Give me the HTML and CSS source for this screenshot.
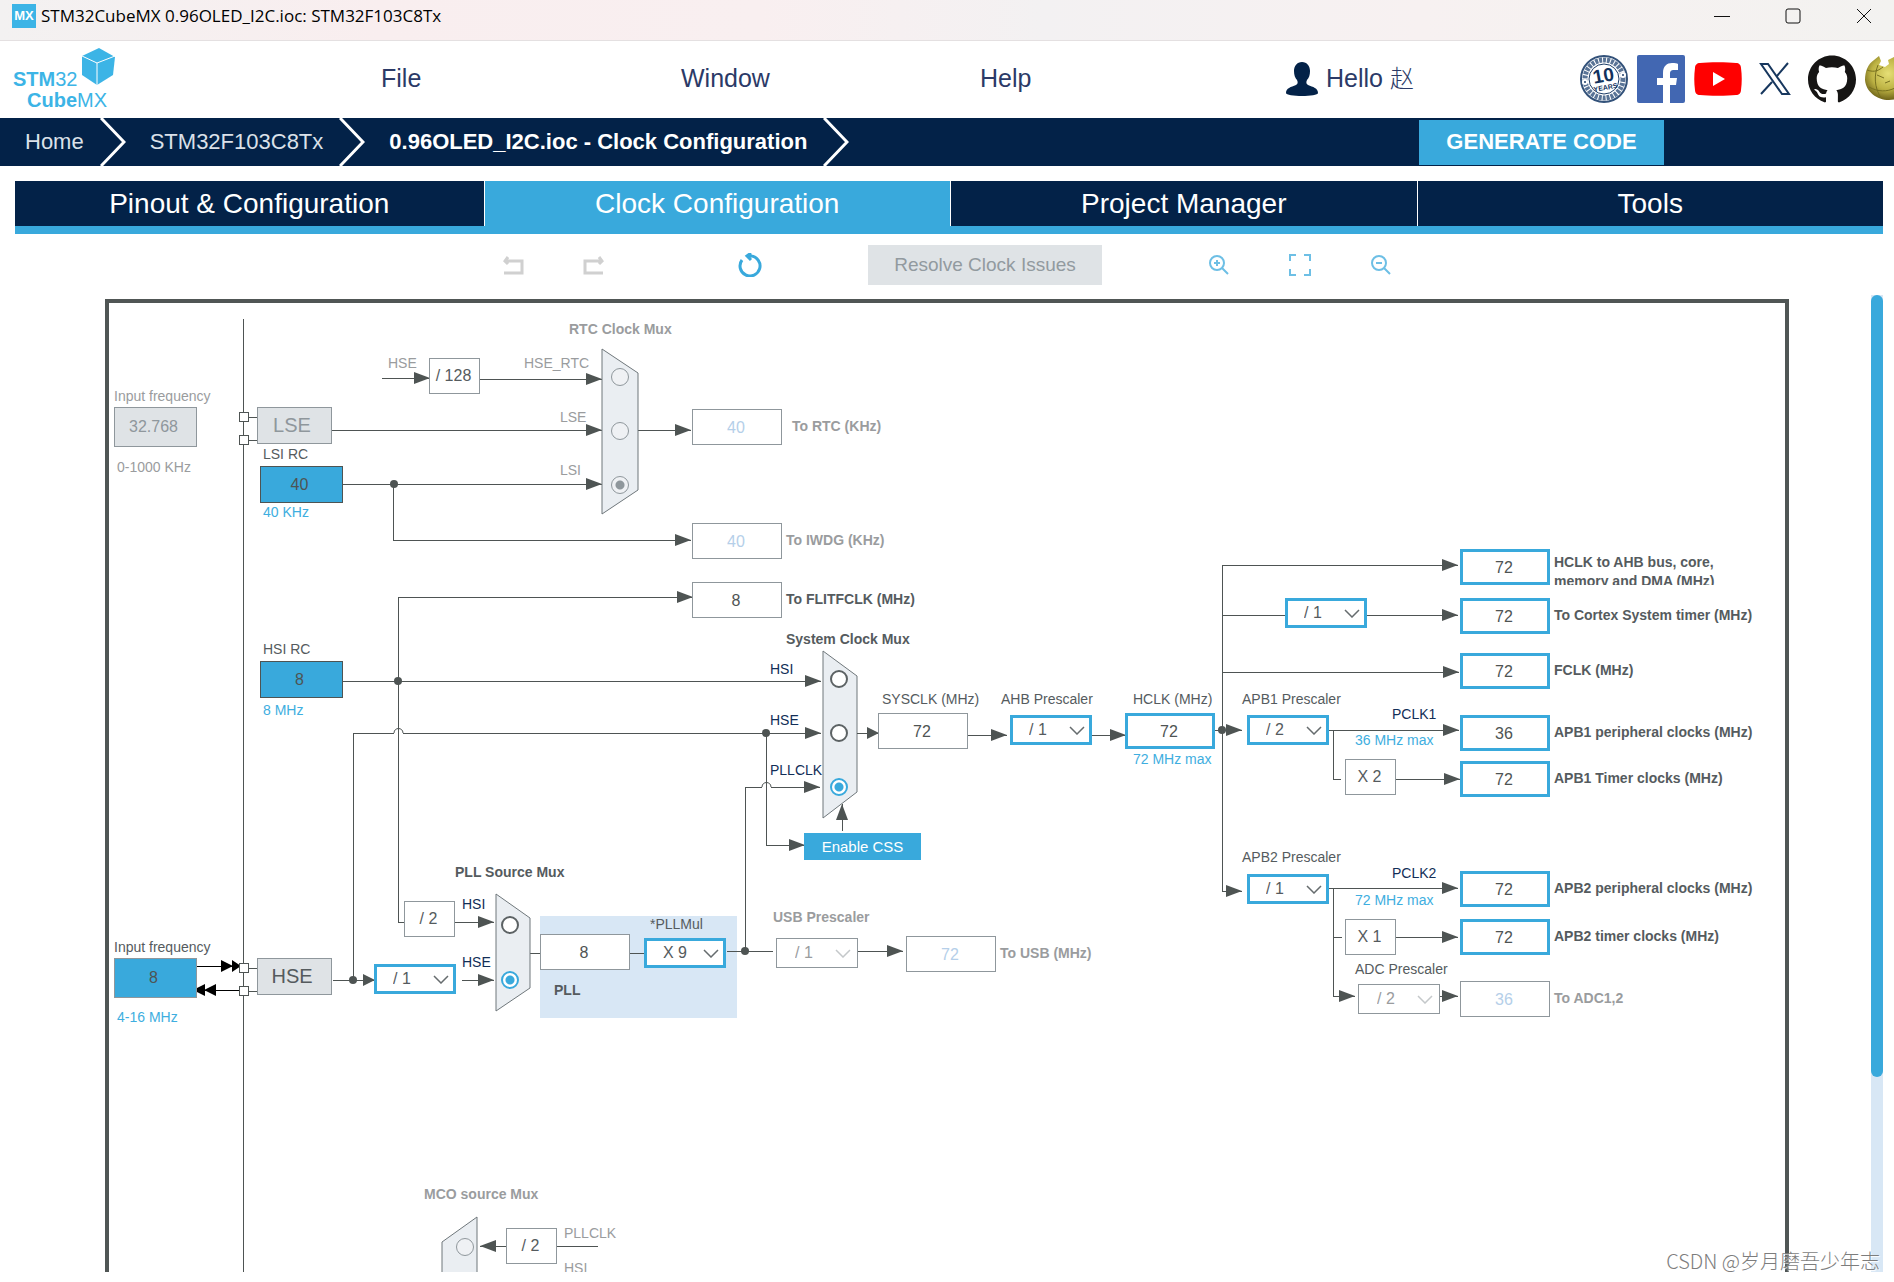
FILE: index.html
```html
<!DOCTYPE html>
<html lang="en">
<head>
<meta charset="utf-8">
<title>STM32CubeMX 0.96OLED_I2C.ioc: STM32F103C8Tx</title>
<link rel="stylesheet" href="styles.css">
</head>
<body>
<div class="window">

<header class="titlebar">
  <span class="app-icon" aria-hidden="true">MX</span>
  <h1 class="app-title">STM32CubeMX 0.96OLED_I2C.ioc: STM32F103C8Tx</h1>
  <div class="window-controls">
    <button type="button" aria-label="Minimize"><svg width="16" height="16" viewBox="0 0 16 16"><path d="M0 8.5h16"/></svg></button>
    <button type="button" aria-label="Maximize"><svg width="16" height="16" viewBox="0 0 16 16"><rect x="1" y="1" width="14" height="14" rx="2"/></svg></button>
    <button type="button" aria-label="Close"><svg width="16" height="16" viewBox="0 0 16 16"><path d="M1 1l14 14M15 1L1 15"/></svg></button>
  </div>
</header>

<nav class="menubar" aria-label="Main menu">
  <svg class="logo" width="104" height="66" viewBox="0 0 104 66" role="img" aria-label="STM32 CubeMX">
    <path class="cube" d="M86 2l16 9-2 18-16 10-15-10V10z"/>
    <path class="cube-edge" d="M69 10l15 7 18-7M84 17v22"/>
    <text x="0" y="40"><tspan class="strong">STM</tspan>32</text>
    <text x="14" y="61"><tspan class="strong">Cube</tspan>MX</text>
  </svg>
  <a href="#file">File</a>
  <a href="#window">Window</a>
  <a href="#help">Help</a>
  <a class="user" href="#account">
    <svg width="32" height="34" viewBox="0 0 32 34" aria-hidden="true"><path d="M16 0c5 0 8 4 8 9 0 4-1 7-3 9-1 2-1 4 1 5 5 2 10 3 10 8 0 2-8 3-16 3S0 33 0 31c0-5 5-6 10-8 2-1 2-3 1-5-2-2-3-5-3-9 0-5 3-9 8-9z"/></svg>
    <span>Hello <span class="user-name">赵</span></span>
  </a>
  <div class="social">
    <a href="#anniversary" aria-label="10 years">
      <svg width="48" height="48" viewBox="0 0 48 48">
        <circle cx="24" cy="24" r="23" fill="#fff" stroke="#33527a" stroke-width="2"/>
        <circle cx="24" cy="24" r="19" fill="none" stroke="#5a7496" stroke-width="5" stroke-dasharray="3 1"/>
        <circle cx="24" cy="24" r="15" fill="#fff" stroke="#1d3d68" stroke-width="1"/>
        <circle cx="5" cy="27" r="3" fill="#fff"/><circle cx="43" cy="20" r="3" fill="#fff"/>
        <circle cx="5" cy="27" r="1" fill="#1d3d68"/><circle cx="43" cy="20" r="1" fill="#1d3d68"/>
        <g transform="rotate(-10 24 24)" fill="#12325d" font-family="Liberation Sans, sans-serif" font-weight="bold" text-anchor="middle">
          <text x="24" y="27" font-size="19">10</text>
          <text x="24" y="35" font-size="7">YEARS</text>
        </g>
      </svg>
    </a>
    <a href="#facebook" aria-label="Facebook">
      <svg width="48" height="48" viewBox="0 0 48 48"><rect width="48" height="48" rx="2" fill="#4267b2"/><path fill="#fff" d="M26 48V30h-6v-7h6v-5c0-7 4-10 9-10 3 0 5 0 6 1v6h-4c-3 0-4 1-4 4v4h7l-1 7h-6v18z"/></svg>
    </a>
    <a href="#youtube" aria-label="YouTube">
      <svg width="48" height="48" viewBox="0 0 48 48"><path fill="#f00" d="M6 8c8-1 28-1 36 0 3 0 5 2 5 5 1 7 1 15 0 22 0 3-2 5-5 5-8 1-28 1-36 0-3 0-5-2-5-5-1-7-1-15 0-22 0-3 2-5 5-5z"/><path fill="#fff" d="M19 17l12 7-12 7z"/></svg>
    </a>
    <a href="#x" aria-label="X">
      <svg width="48" height="48" viewBox="0 0 48 48"><path fill="none" stroke="#17375e" stroke-width="2" d="M10 9h7l21 30h-7zM37 8L26 21M21 27L10 39"/></svg>
    </a>
    <a href="#github" aria-label="GitHub">
      <svg width="48" height="48" viewBox="0 0 24 24"><path fill="#161514" d="M12 .297c-6.63 0-12 5.373-12 12 0 5.303 3.438 9.8 8.205 11.385.6.113.82-.258.82-.577 0-.285-.01-1.04-.015-2.04-3.338.724-4.042-1.61-4.042-1.61C4.422 18.07 3.633 17.7 3.633 17.7c-1.087-.744.084-.729.084-.729 1.205.084 1.838 1.236 1.838 1.236 1.07 1.835 2.809 1.305 3.495.998.108-.776.417-1.305.76-1.605-2.665-.3-5.466-1.332-5.466-5.93 0-1.31.465-2.38 1.235-3.22-.135-.303-.54-1.523.105-3.176 0 0 1.005-.322 3.3 1.23.96-.267 1.98-.399 3-.405 1.02.006 2.04.138 3 .405 2.28-1.552 3.285-1.23 3.285-1.23.645 1.653.24 2.873.12 3.176.765.84 1.23 1.91 1.23 3.22 0 4.61-2.805 5.625-5.475 5.92.42.36.81 1.096.81 2.22 0 1.606-.015 2.896-.015 3.286 0 .315.21.69.825.57C20.565 22.092 24 17.592 24 12.297c0-6.627-5.373-12-12-12"/></svg>
    </a>
    <a href="#wiki" aria-label="Wiki">
      <svg width="48" height="48" viewBox="0 0 48 48">
        <defs><radialGradient id="globe" cx="0.5" cy="0.4" r="0.6"><stop offset="0" stop-color="#e6df76"/><stop offset="0.6" stop-color="#bdb344"/><stop offset="1" stop-color="#6f6419"/></radialGradient></defs>
        <path fill="url(#globe)" d="M9 5l5-4 2 5-2 4 6 2 4-3-1-4 6-3 6-1C44 9 47 17 46 25c-1 12-10 20-22 20S1 37 0 25C0 16 3 9 9 5z"/>
        <path fill="none" stroke="#77701f" d="M2 15c8 3 12 0 16-3M4 32c9 5 18 5 26 1M13 10c-4 10-4 22 3 33M12 20l7 3M20 28l5-2"/>
      </svg>
    </a>
  </div>
</nav>

<nav class="breadcrumb" aria-label="Breadcrumb">
  <a href="#home">Home</a>
  <svg width="26" height="48" viewBox="0 0 26 48" aria-hidden="true"><path d="M1 0l23 24L1 48"/></svg>
  <a href="#mcu">STM32F103C8Tx</a>
  <svg width="26" height="48" viewBox="0 0 26 48" aria-hidden="true"><path d="M1 0l23 24L1 48"/></svg>
  <a class="current" href="#clock" aria-current="page">0.96OLED_I2C.ioc - Clock Configuration</a>
  <svg width="26" height="48" viewBox="0 0 26 48" aria-hidden="true"><path d="M1 0l23 24L1 48"/></svg>
  <button class="generate" type="button">GENERATE CODE</button>
</nav>

<div class="tabs" role="tablist">
  <button type="button" role="tab" aria-selected="false">Pinout &amp; Configuration</button>
  <button type="button" role="tab" aria-selected="true">Clock Configuration</button>
  <button type="button" role="tab" aria-selected="false">Project Manager</button>
  <button type="button" role="tab" aria-selected="false">Tools</button>
</div>

<div class="toolbar" role="toolbar" aria-label="Clock tools">
  <div class="tool-group">
    <button class="tool" type="button" aria-label="Undo" disabled><svg width="22" height="22" viewBox="0 0 22 22"><path d="M6 3L3 7l3 3M3 7h17v12H2"/></svg></button>
    <button class="tool" type="button" aria-label="Redo" disabled><svg width="22" height="22" viewBox="0 0 22 22"><path d="M16 3l3 4-3 3M19 7H2v12h18"/></svg></button>
  </div>
  <button class="tool reset" type="button" aria-label="Reset"><svg width="24" height="24" viewBox="0 0 24 24"><path d="M4 7a10 10 0 1 0 9-4h-3M13 0l-4 3 4 4"/></svg></button>
  <button class="resolve" type="button" disabled>Resolve Clock Issues</button>
  <div class="tool-group">
    <button class="tool thin" type="button" aria-label="Zoom in"><svg width="22" height="22" viewBox="0 0 22 22"><circle cx="9" cy="9" r="7"/><path d="M14 14l6 6M6 9h6M9 6v6"/></svg></button>
    <button class="tool thin" type="button" aria-label="Fit"><svg width="22" height="22" viewBox="0 0 22 22"><path d="M1 7V1h6M15 1h6v6M21 15v6h-6M7 21H1v-6"/></svg></button>
    <button class="tool thin" type="button" aria-label="Zoom out"><svg width="22" height="22" viewBox="0 0 22 22"><circle cx="9" cy="9" r="7"/><path d="M14 14l6 6M6 9h6"/></svg></button>
  </div>
</div>

<main class="workspace">
  <div class="board">
    <!-- wires, arrows and mux bodies -->
    <svg class="wires" width="1684" height="1400" viewBox="105 299 1684 1400" aria-hidden="true">
      <defs>
        <marker id="arrow" markerUnits="userSpaceOnUse" markerWidth="16" markerHeight="12" refX="16" refY="6" orient="auto"><path class="head" d="M0 0l16 6-16 6z"/></marker>
        <marker id="short-arrow" markerUnits="userSpaceOnUse" markerWidth="12" markerHeight="12" refX="12" refY="6" orient="auto"><path class="head" d="M0 0l12 6-12 6z"/></marker>
      </defs>

      <rect class="pll" x="540" y="916" width="197" height="102"/>

      <path class="wire" d="M243 319V1699M243 417H257M243 440H257M243 968H257M243 991H257"/>

      <!-- RTC branch -->
      <path class="wire to" d="M382 378H430"/>
      <path class="wire to" d="M480 379H602"/>
      <path class="wire to" d="M331 430H602"/>
      <path class="wire to" d="M342 484H602"/>
      <path class="wire to" d="M393 484V540H691"/>
      <path class="wire to" d="M638 430H691"/>
      <path class="mux" d="M602 349L638 373V490L602 514z"/>

      <!-- HSI and HSE distribution -->
      <path class="wire to" d="M342 681H821"/>
      <path class="wire to" d="M398 681V597H693"/>
      <path class="wire" d="M398 681V922H404"/>
      <path class="wire" d="M353 980V733H394M403 733H766"/>
      <path class="hop" d="M394 733c0-6 9-6 9 0"/>
      <path class="wire to" d="M766 733H821"/>
      <path class="wire to" d="M766 733V845H805"/>
      <path class="wire" d="M745 951V787H762"/>
      <path class="hop" d="M762 787c0-6 9-6 9 0"/>
      <path class="wire to" d="M771 787H820"/>
      <path class="wire to-short" d="M333 980H375"/>
      <path class="wire to" d="M454 922H494"/>
      <path class="wire to" d="M462 980H494"/>
      <path class="wire" d="M530 953H540M630 953H644M727 951H773"/>
      <path class="wire to" d="M858 951H903"/>
      <path class="mux" d="M496 894L530 918V988L496 1011z"/>
      <path class="mux" d="M823 651L857 676V792L823 818z"/>
      <path class="wire to" d="M842 831V804"/>

      <!-- system clock chain -->
      <path class="wire to-short" d="M857 733H879"/>
      <path class="wire to" d="M967 735H1007"/>
      <path class="wire to" d="M1092 735H1126"/>
      <path class="wire to" d="M1215 730H1242"/>
      <path class="wire to" d="M1222 730V565H1458"/>
      <path class="wire to" d="M1222 730V891H1242"/>
      <path class="wire" d="M1222 615H1285"/>
      <path class="wire to" d="M1367 615H1458"/>
      <path class="wire to" d="M1222 672H1459"/>
      <path class="wire to" d="M1329 730H1459"/>
      <path class="wire" d="M1333 730V779H1341"/>
      <path class="wire to" d="M1395 779H1460"/>
      <path class="wire to" d="M1329 888H1458"/>
      <path class="wire to" d="M1333 888V996H1355"/>
      <path class="wire" d="M1333 937H1342"/>
      <path class="wire to" d="M1395 937H1458"/>
      <path class="wire to" d="M1440 996H1458"/>

      <!-- MCO branch -->
      <path class="mux" d="M477 1217L442 1242V1420L477 1445z"/>
      <path class="wire to" d="M506 1246H480"/>
      <path class="wire" d="M557 1246H598"/>

      <g class="junctions">
        <circle cx="394" cy="484" r="4"/><circle cx="398" cy="681" r="4"/><circle cx="353" cy="980" r="4"/>
        <circle cx="766" cy="733" r="4"/><circle cx="745" cy="951" r="4"/><circle cx="1222" cy="730" r="4"/>
      </g>

      <!-- external oscillator pins -->
      <path class="ext" d="M196 966H232M196 990H239"/>
      <path class="ext-head" d="M221 960l12 6-12 6zM232 960l9 6-9 6zM216 984l-12 6 12 6zM205 984l-12 6 12 6z"/>
      <g class="pins">
        <rect x="239" y="412" width="9" height="9"/><rect x="239" y="435" width="9" height="9"/>
        <rect x="239" y="963" width="9" height="9"/><rect x="239" y="986" width="9" height="9"/>
      </g>
    </svg>

    <!-- low speed sources -->
    <label class="node dim n-lse-freq-label" for="lse-freq">Input frequency</label>
    <input class="node source off n-lse-freq" id="lse-freq" value="32.768" disabled>
    <span class="node dim n-lse-range">0-1000 KHz</span>
    <span class="node osc off n-lse">LSE</span>
    <label class="node n-lsi-label" for="lsi">LSI RC</label>
    <input class="node source rc n-lsi" id="lsi" value="40" readonly>
    <span class="node hint n-lsi-hint">40 KHz</span>

    <span class="node dim n-rtc-hse">HSE</span>
    <span class="node factor n-div128">/ 128</span>
    <span class="node dim strong n-rtc-title">RTC Clock Mux</span>
    <label class="node dim n-rtc-l1" for="rtc-1">HSE_RTC</label>
    <label class="node dim n-rtc-l2" for="rtc-2">LSE</label>
    <label class="node dim n-rtc-l3" for="rtc-3">LSI</label>
    <input class="node n-rtc-1" type="radio" name="rtc" id="rtc-1" disabled>
    <input class="node n-rtc-2" type="radio" name="rtc" id="rtc-2" disabled>
    <input class="node n-rtc-3" type="radio" name="rtc" id="rtc-3" checked disabled>

    <div class="node sink off spaced n-to-rtc"><input class="value" id="to-rtc" value="40" disabled><label for="to-rtc">To RTC (KHz)</label></div>
    <div class="node sink off n-to-iwdg"><input class="value" id="to-iwdg" value="40" disabled><label for="to-iwdg">To IWDG (KHz)</label></div>
    <div class="node sink n-to-flitf"><input class="value" id="to-flitf" value="8" readonly><label for="to-flitf">To FLITFCLK (MHz)</label></div>

    <!-- high speed sources -->
    <label class="node n-hsi-label" for="hsi">HSI RC</label>
    <input class="node source rc n-hsi" id="hsi" value="8" readonly>
    <span class="node hint n-hsi-hint">8 MHz</span>
    <label class="node n-hse-freq-label" for="hse-freq">Input frequency</label>
    <input class="node source n-hse-freq" id="hse-freq" value="8">
    <span class="node hint n-hse-range">4-16 MHz</span>
    <span class="node osc n-hse">HSE</span>

    <!-- PLL -->
    <span class="node strong n-pll-title">PLL Source Mux</span>
    <span class="node factor n-hsi-div">/ 2</span>
    <select class="node n-hse-div" aria-label="HSE divider"><option>/ 1</option><option>/ 2</option></select>
    <label class="node net n-pll-l1" for="pll-1">HSI</label>
    <label class="node net n-pll-l2" for="pll-2">HSE</label>
    <input class="node n-pll-1" type="radio" name="pll" id="pll-1">
    <input class="node n-pll-2" type="radio" name="pll" id="pll-2" checked>
    <label class="node strong n-pll-label" for="pll-in">PLL</label>
    <input class="node value n-pll-in" id="pll-in" value="8" readonly>
    <label class="node n-pllmul-label" for="pllmul">*PLLMul</label>
    <select class="node n-pllmul" id="pllmul"><option>X 9</option></select>
    <label class="node dim strong n-usb-label" for="usb">USB Prescaler</label>
    <select class="node n-usb" id="usb" disabled><option>/ 1</option></select>
    <div class="node sink off n-to-usb"><input class="value" id="to-usb" value="72" disabled><label for="to-usb">To USB (MHz)</label></div>

    <!-- system clock -->
    <span class="node strong n-sys-title">System Clock Mux</span>
    <label class="node net n-sys-l1" for="sys-1">HSI</label>
    <label class="node net n-sys-l2" for="sys-2">HSE</label>
    <label class="node net n-sys-l3" for="sys-3">PLLCLK</label>
    <input class="node n-sys-1" type="radio" name="sys" id="sys-1">
    <input class="node n-sys-2" type="radio" name="sys" id="sys-2">
    <input class="node n-sys-3" type="radio" name="sys" id="sys-3" checked>
    <button class="node css-button" type="button">Enable CSS</button>
    <label class="node n-sysclk-label" for="sysclk">SYSCLK (MHz)</label>
    <input class="node value n-sysclk" id="sysclk" value="72" readonly>
    <label class="node n-ahb-label" for="ahb">AHB Prescaler</label>
    <select class="node n-ahb" id="ahb"><option>/ 1</option></select>
    <label class="node n-hclk-label" for="hclk">HCLK (MHz)</label>
    <input class="node value live n-hclk" id="hclk" value="72">
    <span class="node hint n-hclk-hint">72 MHz max</span>

    <!-- peripheral buses -->
    <select class="node n-cortex" aria-label="Cortex prescaler"><option>/ 1</option></select>
    <label class="node n-apb1-label" for="apb1">APB1 Prescaler</label>
    <select class="node n-apb1" id="apb1"><option>/ 2</option></select>
    <span class="node net n-pclk1">PCLK1</span>
    <span class="node hint n-pclk1-hint">36 MHz max</span>
    <span class="node factor n-x2">X 2</span>
    <label class="node n-apb2-label" for="apb2">APB2 Prescaler</label>
    <select class="node n-apb2" id="apb2"><option>/ 1</option></select>
    <span class="node net n-pclk2">PCLK2</span>
    <span class="node hint n-pclk2-hint">72 MHz max</span>
    <span class="node factor n-x1">X 1</span>
    <label class="node n-adc-label" for="adc">ADC Prescaler</label>
    <select class="node n-adc" id="adc" disabled><option>/ 2</option></select>

    <div class="node sink two-line n-out-1"><input class="value live" id="out-1" value="72"><label for="out-1">HCLK to AHB bus, core, memory and DMA (MHz)</label></div>
    <div class="node sink n-out-2"><input class="value live" id="out-2" value="72"><label for="out-2">To Cortex System timer (MHz)</label></div>
    <div class="node sink n-out-3"><input class="value live" id="out-3" value="72"><label for="out-3">FCLK (MHz)</label></div>
    <div class="node sink n-out-4"><input class="value live" id="out-4" value="36"><label for="out-4">APB1 peripheral clocks (MHz)</label></div>
    <div class="node sink n-out-5"><input class="value live" id="out-5" value="72"><label for="out-5">APB1 Timer clocks (MHz)</label></div>
    <div class="node sink n-out-6"><input class="value live" id="out-6" value="72"><label for="out-6">APB2 peripheral clocks (MHz)</label></div>
    <div class="node sink n-out-7"><input class="value live" id="out-7" value="72"><label for="out-7">APB2 timer clocks (MHz)</label></div>
    <div class="node sink off n-out-8"><input class="value" id="out-8" value="36" disabled><label for="out-8">To ADC1,2</label></div>

    <!-- MCO -->
    <span class="node dim strong n-mco-title">MCO source Mux</span>
    <input class="node n-mco-1" type="radio" name="mco" id="mco-1" disabled>
    <span class="node factor n-mco-div">/ 2</span>
    <label class="node dim n-mco-l1" for="mco-1">PLLCLK</label>
    <span class="node dim n-mco-l2">HSI</span>
  </div>
  <div class="scrollbar" aria-hidden="true"><div class="thumb"></div></div>
</main>

<p class="watermark">CSDN @岁月磨吾少年志</p>
</div>
</body>
</html>
```
FILE: styles.css
```css
:root {
  --navy: #032248;
  --blue: #39a9dc;
  --pale: #d8e7f5;
  --ink: #4e5453;
  --text: #555b5e;
  --dim: #9a9c9e;
  --edge: #8f979c;
}

* { box-sizing: border-box; }

body {
  margin: 0;
  background: #fff;
  color: var(--text);
  font-family: "Liberation Sans", Arial, "Noto Sans CJK SC", sans-serif;
}

button, input, select { font-family: inherit; margin: 0; }
a { color: inherit; text-decoration: none; }

.window {
  position: relative;
  display: flex;
  flex-direction: column;
  height: 100vh;
  overflow: hidden;
}

/* title bar */
.titlebar {
  display: flex;
  flex: none;
  align-items: center;
  gap: 5px;
  height: 41px;
  padding: 0 22px 9px 12px;
  border-bottom: 1px solid #e4e0e1;
  background: linear-gradient(90deg, #f3f1f1, #f9eeef 20%, #f9eff0 40%, #f3f1f2 55%, #f7f1f1 75%, #f3f2f0);
}

.app-icon {
  width: 24px;
  background: #3cb4e6;
  color: #fff;
  font-size: 13px;
  font-weight: bold;
  line-height: 24px;
  text-align: center;
}

.app-title {
  flex: 1;
  margin: 0;
  color: #000;
  font: 17px/24px "Open Sans", "Noto Sans", sans-serif;
}

.window-controls { display: flex; gap: 55px; }
.window-controls button { display: flex; padding: 0; border: 0; background: none; }
.window-controls svg { fill: none; stroke: #111; }

/* menu */
.menubar {
  display: grid;
  flex: none;
  grid-template-columns: 381fr 300fr 299fr 306fr 294fr 314fr;
  align-items: center;
  height: 77px;
  padding-bottom: 2px;
  color: #2b3a67;
  font-size: 25px;
}

.logo { margin-left: 13px; fill: #3cb4e6; font-size: 20px; }
.logo .strong { font-weight: bold; }
.cube-edge { fill: none; stroke: #fff; }
.user { display: flex; align-items: center; gap: 8px; line-height: 32px; white-space: nowrap; }
.user svg { fill: var(--navy); }
.user-name { font-size: 24px; font-weight: 300; }
.social { display: flex; gap: 9px; min-width: 0; overflow: hidden; }
.social a { display: flex; flex: none; }

/* breadcrumb */
.breadcrumb {
  display: flex;
  flex: none;
  align-items: center;
  height: 48px;
  padding: 0 230px 0 25px;
  background: var(--navy);
  color: #fff;
  font-size: 22px;
}

.breadcrumb a { color: #dbe1e9; }
.breadcrumb .current { color: #fff; font-weight: bold; }
.breadcrumb svg { margin: 0 24px 0 16px; fill: none; stroke: #fff; stroke-width: 3; }

.generate {
  width: 245px;
  height: 45px;
  margin-left: auto;
  border: 0;
  background: var(--blue);
  color: #fff;
  font-size: 22px;
  font-weight: bold;
}

/* tabs */
.tabs {
  display: grid;
  flex: none;
  grid-template-columns: 468fr 465fr 465fr 465fr;
  gap: 1px;
  margin: 15px 11px 0 15px;
  border-bottom: 8px solid var(--blue);
}

.tabs button {
  height: 45px;
  padding: 0;
  border: 0;
  background: var(--navy);
  color: #fff;
  font-size: 28px;
}

.tabs [aria-selected="true"] { background: var(--blue); }

/* toolbar */
.toolbar {
  display: flex;
  flex: none;
  align-items: center;
  justify-content: center;
  gap: 106px;
  height: 61px;
}

.tool-group { display: flex; gap: 59px; }
.tool { display: flex; padding: 0; border: 0; background: none; }
.tool svg { fill: none; stroke: var(--blue); stroke-width: 3; }
.tool:disabled svg { stroke: #d0d0d0; }
.tool.thin svg { stroke: #6dbfe5; stroke-width: 2; }
.tool.reset { margin-left: 27px; }

.resolve {
  width: 234px;
  height: 40px;
  padding: 0;
  border: 0;
  background: #dfe3e6;
  color: #929a9f;
  font-size: 19px;
}

/* workspace */
.workspace {
  display: grid;
  flex: 1;
  grid-template-rows: 100%;
  grid-template-columns: 1fr 1684px 1fr;
  min-height: 0;
  margin-bottom: 10px;
  overflow: hidden;
}

.board {
  position: relative;
  grid-column: 2;
  height: 1400px;
  margin-top: 4px;
}

.board::before {
  position: absolute;
  inset: 0;
  border: 4px solid #505655;
  content: "";
}

.scrollbar { width: 12px; margin-right: 11px; justify-self: end; background: var(--pale); }
.thumb { height: 80%; border-radius: 6px; background: var(--blue); }

.wires { position: absolute; inset: 0; }
.wire { fill: none; stroke: var(--ink); shape-rendering: crispEdges; }
.to { marker-end: url(#arrow); }
.to-short { marker-end: url(#short-arrow); }
.head { fill: var(--ink); shape-rendering: auto; }
.hop { fill: none; stroke: var(--ink); }
.mux { fill: #eaeef2; stroke: #6f777b; }
.pll { fill: var(--pale); }
.junctions { fill: var(--ink); }
.ext { stroke: #000; shape-rendering: crispEdges; }
.ext-head { fill: #000; }
.pins { fill: #fff; stroke: var(--ink); shape-rendering: crispEdges; }

/* diagram parts */
.node { position: absolute; font-size: 14px; line-height: 16px; white-space: nowrap; }
.strong { font-weight: bold; }
.dim { color: var(--dim); }
.net { color: #122e57; }
.hint { color: #3eaee0; }

.source, .value {
  border: 1px solid var(--edge);
  background: #fff;
  color: var(--ink);
  font-size: 16px;
  text-align: center;
  padding: 0 2px 0 0;
}

.source { width: 83px; height: 40px; padding-right: 4px; background: var(--blue); }
.source.rc { height: 37px; border-color: var(--ink); }
.source.off { background: #dfe3e6; color: var(--edge); }
.value { width: 90px; height: 36px; padding-top: 2px; }
.value:disabled { color: #b5cfe9; }
.value.live { border: 3px solid var(--blue); }

.osc {
  width: 75px;
  height: 37px;
  padding-right: 5px;
  border: 1px solid var(--edge);
  background: #dfe3e6;
  font-size: 20px;
  line-height: 35px;
  text-align: center;
}
.osc.off { color: var(--edge); }

.factor {
  width: 51px;
  height: 36px;
  padding-right: 2px;
  border: 1px solid var(--edge);
  background: #fff;
  font-size: 16px;
  line-height: 34px;
  text-align: center;
}

select.node {
  width: 82px;
  height: 30px;
  padding: 0 0 0 16px;
  border: 3px solid var(--blue);
  border-radius: 0;
  appearance: none;
  background: #fff url("data:image/svg+xml,%3Csvg xmlns='http://www.w3.org/2000/svg' width='16' height='9'%3E%3Cpath d='M1 1l7 7 7-7' fill='none' stroke='%23666c6e' stroke-width='1.5'/%3E%3C/svg%3E") no-repeat right 4px center;
  color: var(--text);
  font-size: 16px;
}

select.node:disabled {
  padding-left: 18px;
  border: 1px solid var(--edge);
  background-image: url("data:image/svg+xml,%3Csvg xmlns='http://www.w3.org/2000/svg' width='16' height='9'%3E%3Cpath d='M1 1l7 7 7-7' fill='none' stroke='%23c4c8ca' stroke-width='1.5'/%3E%3C/svg%3E");
  background-position: right 6px center;
  color: #9a9c9e;
  opacity: 1;
}

.node[type="radio"] {
  width: 18px;
  height: 18px;
  border: 2px solid #5c6264;
  border-radius: 50%;
  appearance: none;
  background: #fff;
}

.node[type="radio"]:checked { border-color: var(--blue); background: radial-gradient(circle, var(--blue) 4px, #fff 5px); }
.node[type="radio"]:disabled { border: 1px solid var(--edge); background: #eff1f4; }
.node[type="radio"]:checked:disabled { background: radial-gradient(circle, var(--edge) 4px, #eff1f4 5px); }

.sink { display: flex; align-items: center; gap: 4px; font-weight: bold; }
.sink label { padding-bottom: 3px; }
.sink.off { color: var(--dim); }
.sink.spaced { gap: 10px; }
.sink.two-line { height: 36px; overflow: hidden; }
.sink.two-line label { align-self: flex-start; width: 180px; padding: 4px 0 0; line-height: 19px; white-space: normal; }

.css-button {
  left: 699px;
  top: 534px;
  width: 117px;
  height: 27px;
  padding: 0;
  border: 0;
  background: var(--blue);
  color: #fff;
  font-size: 15px;
}

/* places on the diagram */
.n-lse-freq-label { left: 9px; top: 89px; }
.n-lse-freq { left: 9px; top: 108px; }
.n-lse-range { left: 12px; top: 160px; }
.n-lse { left: 152px; top: 108px; }
.n-lsi-label { left: 158px; top: 147px; }
.n-lsi { left: 155px; top: 167px; }
.n-lsi-hint { left: 158px; top: 205px; }
.n-rtc-hse { left: 283px; top: 56px; }
.n-div128 { left: 324px; top: 59px; }
.n-rtc-title { left: 464px; top: 22px; }
.n-rtc-l1 { left: 419px; top: 56px; }
.n-rtc-l2 { left: 455px; top: 110px; }
.n-rtc-l3 { left: 455px; top: 163px; }
.n-rtc-1 { left: 506px; top: 69px; }
.n-rtc-2 { left: 506px; top: 123px; }
.n-rtc-3 { left: 506px; top: 177px; }
.n-to-rtc { left: 587px; top: 110px; }
.n-to-iwdg { left: 587px; top: 224px; }
.n-to-flitf { left: 587px; top: 283px; }

.n-hsi-label { left: 158px; top: 342px; }
.n-hsi { left: 155px; top: 362px; }
.n-hsi-hint { left: 158px; top: 403px; }
.n-hse-freq-label { left: 9px; top: 640px; }
.n-hse-freq { left: 9px; top: 659px; }
.n-hse-range { left: 12px; top: 710px; }
.n-hse { left: 152px; top: 659px; }

.n-pll-title { left: 350px; top: 565px; }
.n-hsi-div { left: 299px; top: 602px; }
.n-hse-div { left: 269px; top: 665px; }
.n-pll-l1 { left: 357px; top: 597px; }
.n-pll-l2 { left: 357px; top: 655px; }
.n-pll-1 { left: 396px; top: 617px; }
.n-pll-2 { left: 396px; top: 672px; }
.n-pll-label { left: 449px; top: 683px; }
.n-pll-in { left: 435px; top: 635px; }
.n-pllmul-label { left: 545px; top: 617px; }
.n-pllmul { left: 539px; top: 639px; }
.n-usb-label { left: 668px; top: 610px; }
.n-usb { left: 671px; top: 639px; }
.n-to-usb { left: 801px; top: 637px; }

.n-sys-title { left: 681px; top: 332px; }
.n-sys-l1 { left: 665px; top: 362px; }
.n-sys-l2 { left: 665px; top: 413px; }
.n-sys-l3 { left: 665px; top: 463px; }
.n-sys-1 { left: 725px; top: 371px; }
.n-sys-2 { left: 725px; top: 425px; }
.n-sys-3 { left: 725px; top: 479px; }
.n-sysclk-label { left: 777px; top: 392px; }
.n-sysclk { left: 773px; top: 414px; }
.n-ahb-label { left: 896px; top: 392px; }
.n-ahb { left: 905px; top: 416px; }
.n-hclk-label { left: 1028px; top: 392px; }
.n-hclk { left: 1020px; top: 414px; }
.n-hclk-hint { left: 1028px; top: 452px; }

.n-cortex { left: 1180px; top: 299px; }
.n-apb1-label { left: 1137px; top: 392px; }
.n-apb1 { left: 1142px; top: 416px; }
.n-pclk1 { left: 1287px; top: 407px; }
.n-pclk1-hint { left: 1250px; top: 433px; }
.n-x2 { left: 1240px; top: 460px; }
.n-apb2-label { left: 1137px; top: 550px; }
.n-apb2 { left: 1142px; top: 575px; }
.n-pclk2 { left: 1287px; top: 566px; }
.n-pclk2-hint { left: 1250px; top: 593px; }
.n-x1 { left: 1240px; top: 620px; }
.n-adc-label { left: 1250px; top: 662px; }
.n-adc { left: 1253px; top: 685px; }

.n-out-1 { left: 1355px; top: 250px; }
.n-out-2 { left: 1355px; top: 299px; }
.n-out-3 { left: 1355px; top: 354px; }
.n-out-4 { left: 1355px; top: 416px; }
.n-out-5 { left: 1355px; top: 462px; }
.n-out-6 { left: 1355px; top: 572px; }
.n-out-7 { left: 1355px; top: 620px; }
.n-out-8 { left: 1355px; top: 682px; }

.n-mco-title { left: 319px; top: 887px; }
.n-mco-1 { left: 351px; top: 939px; }
.n-mco-div { left: 401px; top: 929px; }
.n-mco-l1 { left: 459px; top: 926px; }
.n-mco-l2 { left: 459px; top: 961px; }

.watermark {
  position: absolute;
  right: 14px;
  bottom: 7px;
  margin: 0;
  color: #7d7d7d;
  font: 20px/29px "Noto Sans CJK SC", sans-serif;
  font-weight: 300;
  text-shadow: 1px 1px 1px #fff;
}
```
